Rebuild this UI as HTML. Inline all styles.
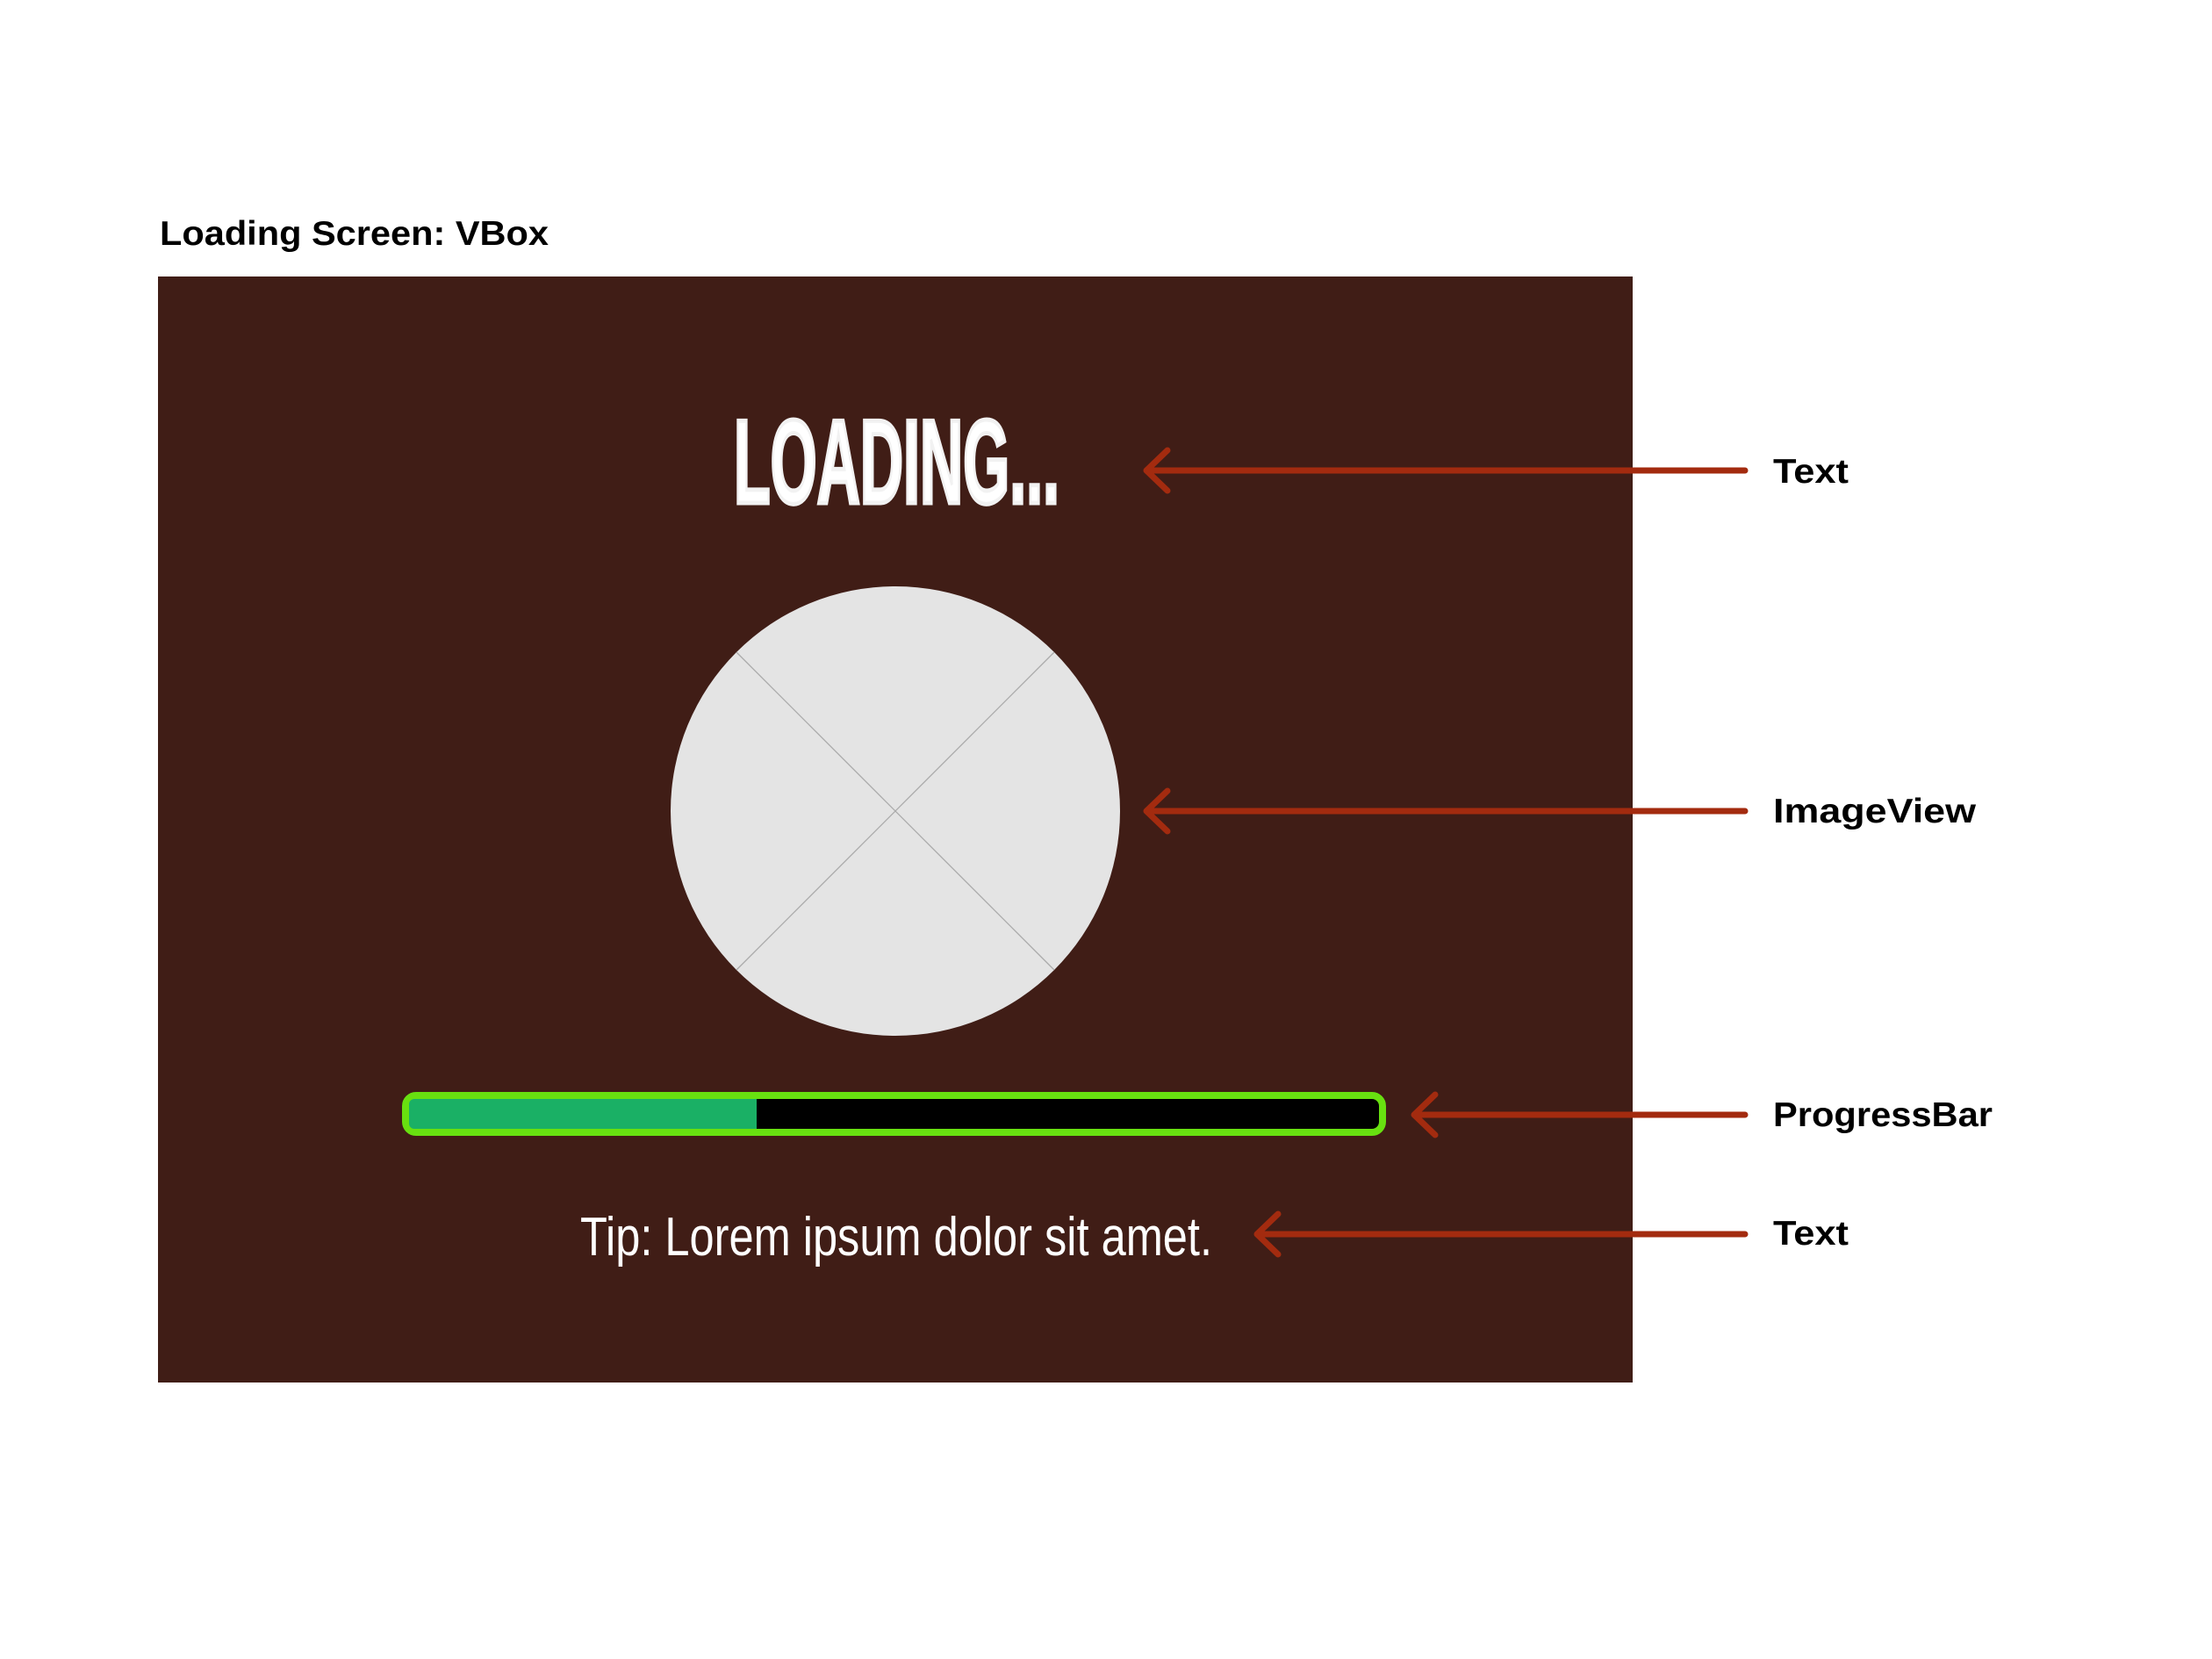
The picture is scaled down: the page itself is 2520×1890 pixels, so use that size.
<!DOCTYPE html>
<html><head><meta charset="utf-8"><style>
html,body{margin:0;padding:0;background:#fff;}
svg{display:block;}
</style></head><body>
<svg width="2520" height="1890" viewBox="0 0 2520 1890" xmlns="http://www.w3.org/2000/svg">
<rect width="2520" height="1890" fill="#fff"/>
<text x="182" y="279" font-family="Liberation Sans, sans-serif" font-weight="bold" font-size="39" textLength="443" lengthAdjust="spacingAndGlyphs" fill="#000">Loading Screen: VBox</text>
<rect x="180" y="315" width="1680" height="1260" fill="#401d16"/>
<text x="836" y="573" font-family="Liberation Sans Narrow, Liberation Sans, sans-serif" font-weight="bold" font-size="136" textLength="371" lengthAdjust="spacingAndGlyphs" fill="#fff" stroke="#f2f2f2" stroke-width="5">LOADING...</text>
<circle cx="1020" cy="924" r="256" fill="#e4e4e4"/>
<line x1="839" y1="743" x2="1201" y2="1105" stroke="#aaa" stroke-width="1.3"/>
<line x1="1201" y1="743" x2="839" y2="1105" stroke="#aaa" stroke-width="1.3"/>
<rect x="462" y="1248" width="1113" height="42" rx="12" fill="#000" stroke="#68e010" stroke-width="8"/>
<rect x="466" y="1252" width="396" height="34" rx="6" fill="#1ab065"/>
<rect x="850" y="1252" width="12" height="34" fill="#1ab065"/>
<text x="661" y="1430" font-family="Liberation Sans Narrow, Liberation Sans, sans-serif" font-size="62" textLength="720" lengthAdjust="spacingAndGlyphs" fill="#fff">Tip: Lorem ipsum dolor sit amet.</text>
<g stroke="#a32b0f" stroke-width="7" stroke-linecap="round" stroke-linejoin="round" fill="none">
<path d="M1306 536H1988M1330 513L1306 536L1330 559"/>
<path d="M1306 924H1988M1330 901L1306 924L1330 947"/>
<path d="M1611 1270H1988M1635 1247L1611 1270L1635 1293"/>
<path d="M1432 1406H1988M1456 1383L1432 1406L1456 1429"/>
</g>
<g font-family="Liberation Sans, sans-serif" font-weight="bold" font-size="39" fill="#000">
<text x="2020" y="550" textLength="86" lengthAdjust="spacingAndGlyphs">Text</text>
<text x="2020" y="937" textLength="231" lengthAdjust="spacingAndGlyphs">ImageView</text>
<text x="2020" y="1283" textLength="250" lengthAdjust="spacingAndGlyphs">ProgressBar</text>
<text x="2020" y="1418" textLength="86" lengthAdjust="spacingAndGlyphs">Text</text>
</g>
</svg>
</body></html>
